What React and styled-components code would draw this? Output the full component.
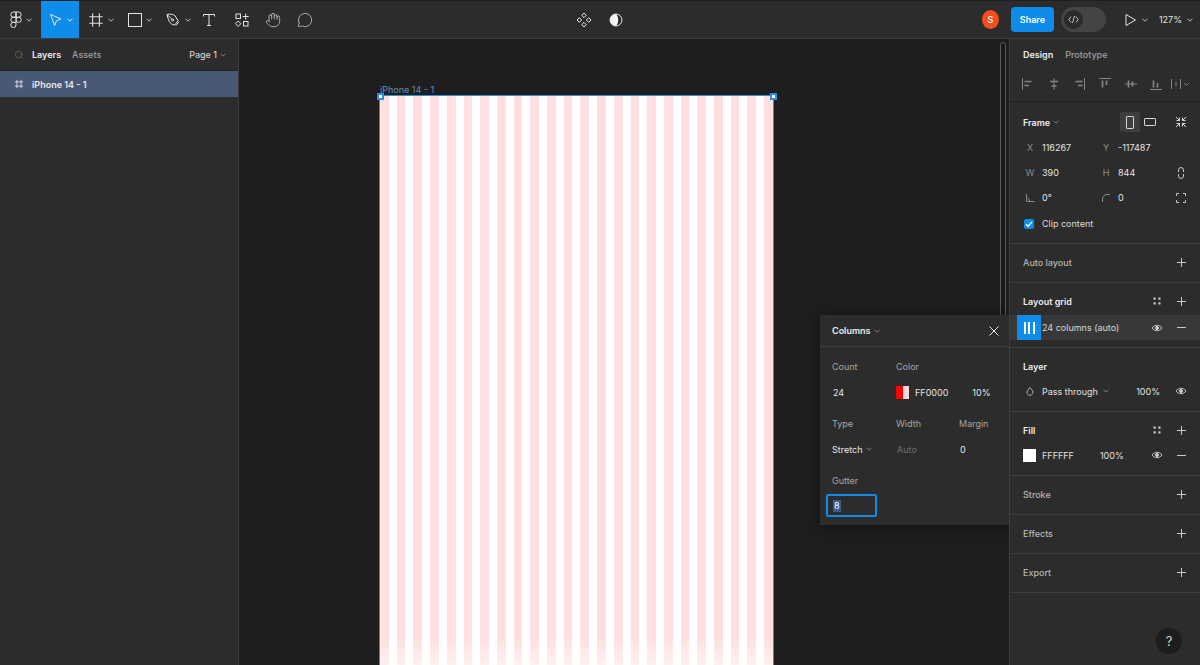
import React from "react";
import styled, { createGlobalStyle } from "styled-components";
import { Hand, MessageCircle, Search } from "lucide-react";

const Global = createGlobalStyle`
  html, body { margin: 0; padding: 0; height: 100%; background: #1e1e1e; overflow: hidden; }
  #root { height: 100%; }
  * { box-sizing: border-box; }
`;
const Page = styled.div`
  height: 665px; width: 1200px; display: flex; flex-direction: column; overflow: hidden;
  font-family: Inter, "Liberation Sans", sans-serif; font-size: 9px; color: #e6e6e6;
  -webkit-font-smoothing: antialiased;
`;
const Topbar = styled.header`
  height: 39px; flex: none; display: flex; align-items: stretch; background: #2c2c2c;
  border-top: 1px solid #1f1f1f; border-bottom: 1px solid #3d3d3d;
`;
const Tool = styled.div`
  width: ${p => p.$w}px; display: flex; align-items: center; justify-content: center; gap: 4px;
  color: #e4e4e4; background: ${p => (p.$active ? "#0d8ce9" : "transparent")};
`;
const CenterTools = styled.div`
  margin-left: 248px; display: flex; align-items: center; gap: 16px; width: 48px;
  & > svg { flex: none; }
`;
const RightTools = styled.div`
  margin-left: auto; display: flex; align-items: center;
`;
const Avatar = styled.div`
  width: 17px; height: 19px; border-radius: 50%; background: #f24e1e; color: #fff; font-size: 9px;
  font-weight: 500; display: flex; align-items: center; justify-content: center; margin-right: 12px;
`;
const ShareBtn = styled.div`
  width: 43px; height: 25px; border-radius: 4px; background: #0d8ce9; color: #fff; font-weight: 600;
  display: flex; align-items: center; justify-content: center; margin-right: 7px;
`;
const DevToggle = styled.div`
  width: 45px; height: 25px; border-radius: 13px; background: #444; padding: 3px; margin-right: 17px;
`;
const Knob = styled.div`
  width: 19px; height: 19px; border-radius: 50%; background: #2a2a2a; display: flex; align-items: center;
  justify-content: center;
`;
const Group = styled.div`
  display: flex; align-items: center; gap: ${p => p.$gap || 4}px; margin-right: ${p => p.$mr || 0}px; color: #e4e4e4;
`;
const Main = styled.main`
  flex: 1; min-height: 0; display: flex;
`;
const LeftPanel = styled.aside`
  width: 239px; flex: none; background: #2c2c2c; border-right: 1px solid #3d3d3d;
`;
const LeftTabs = styled.div`
  height: 32px; display: flex; align-items: center; padding: 0 10px 0 14px; color: #9a9a9a; border-bottom: 1px solid #232323;
`;
const LeftTab = styled.span`
  font-weight: ${p => (p.$on ? 600 : 500)}; color: ${p => (p.$on ? "#ececec" : "#a0a0a0")};
  margin-left: ${p => p.$ml}px;
`;
const PageSel = styled.div`
  margin-left: auto; display: flex; align-items: center; gap: 3px; color: #d0d0d0; font-weight: 500; margin-right: 2px;
`;
const LayerRow = styled.div`
  height: 26px; background: #4a5878; display: flex; align-items: center; gap: 8px; padding-left: 14px;
  font-weight: 600; color: #e8e8e8;
`;
const Canvas = styled.div`
  flex: 1; position: relative; overflow: hidden; background: #1e1e1e;
`;
const FrameLabel = styled.div`
  position: absolute; left: 141px; top: 45px; font-size: 9px; color: #5f93b8; line-height: 12px;
`;
const Frame = styled.div`
  position: absolute; left: 140px; top: 56px; width: 395px; height: 570px; background: #fff;
  border: 1px solid #2a8fe0; border-bottom: 0; display: flex; gap: 8px;
  &::after {
    content: ""; position: absolute; left: 0; right: 0; bottom: 0; height: 26px;
    background: linear-gradient(rgba(255,255,255,0), rgba(255,255,255,.55));
  }
`;
const Stripe = styled.div`
  flex: 1; background: #ffe0e0;
`;
const Handle = styled.div`
  position: absolute; width: 7px; height: 7px; background: #fff; border: 2px solid #2a8fe0;
  top: 54px; left: ${p => p.$x}px; z-index: 2;
`;
const Scrollbar = styled.div`
  position: absolute; left: 761px; top: 3px; width: 6px; height: 300px; border-radius: 3px;
  border: 1px solid #5a5a5a; background: #1a1a1a;
`;
const Popover = styled.div`
  position: absolute; left: 581px; top: 276px; width: 190px; height: 210px; background: #2c2c2c; z-index: 3;
  box-shadow: 0 2px 14px rgba(0,0,0,.45); color: #e6e6e6;
`;
const PopHead = styled.div`
  height: 32px; display: flex; align-items: center; padding: 0 10px 0 12px; border-bottom: 1px solid #3d3d3d;
  font-weight: 600; color: #ececec; gap: 3px; margin-bottom: 6px;
`;
const PopClose = styled.div`
  margin-left: auto; display: flex;
`;
const PopGrid = styled.div`
  display: grid; grid-template-columns: 64px 63px 1fr; grid-auto-rows: 26px; padding-left: 12px; align-items: center;
  margin-bottom: 5px;
`;
const PopLabel = styled.div`
  color: #a8a8a8; font-size: 9px;
`;
const PopVal = styled.div`
  color: ${p => (p.$muted ? "#6f6f6f" : "#e6e6e6")}; display: flex; align-items: center; gap: 3px; font-size: 9px;
  padding-left: ${p => p.$pl || 0}px;
`;
const ColorCell = styled.div`
  grid-column: 2 / 4; display: flex; align-items: center; gap: 6px;
`;
const ColorSwatch = styled.div`
  width: 13px; height: 13px; display: flex;
  & > i { flex: 1; background: #ff0000; }
  & > b { flex: 1; background: #ffd9d9; }
`;
const Pct = styled.span`
  margin-left: ${p => p.$ml}px;
`;
const GutterInput = styled.div`
  width: 51px; height: 23px; border: 2px solid #0d8ce9; border-radius: 2px; margin: -4px 0 0 6px;
  display: flex; align-items: center; padding-left: 5px;
`;
const Selected = styled.span`
  background: #3a5f8f; color: #fff; padding: 0 1px; line-height: 12px;
`;
const RightPanel = styled.aside`
  width: 191px; flex: none; background: #2c2c2c; border-left: 1px solid #3d3d3d; position: relative;
`;
const RightTabs = styled.div`
  height: 31px; display: flex; align-items: center; padding-left: 13px; gap: 12px;
`;
const AlignRow = styled.div`
  height: 33px; display: flex; align-items: center; padding: 0 0 4px 11px; border-bottom: 2px solid #262626; color: #858585;
  & > svg { margin-right: 11.7px; flex: none; }
  & > svg:last-child { margin-left: -4px; }
`;
const Section = styled.section`
  border-bottom: 1px solid #3d3d3d; height: ${p => p.$h}px;
`;
const Head = styled.div`
  height: 36px; display: flex; align-items: center; padding: 0 13px; font-weight: ${p => (p.$on ? 600 : 500)};
  color: ${p => (p.$on ? "#ececec" : "#b6b6b6")};
`;
const HeadIcons = styled.div`
  margin-left: auto; display: flex; align-items: center; gap: 15.5px; color: #c8c8c8;
`;
const FrameHead = styled.div`
  height: 38px; display: flex; align-items: center; padding-left: 13px; font-weight: 600; color: #ececec; gap: 3px; margin-bottom: -6px;
`;
const FrameIcons = styled.div`
  margin-left: auto; display: flex; align-items: center; color: #d8d8d8; padding-right: 13px;
`;
const IconBtn = styled.div`
  width: 20px; height: 20px; border-radius: 2px; background: ${p => (p.$on ? "#3e3e3e" : "transparent")};
  display: flex; align-items: center; justify-content: center; margin-right: ${p => p.$mr || 0}px;
`;
const PropGrid = styled.div`
  display: grid; grid-template-columns: 19px 57px 19px 52px 22px; grid-auto-rows: 25px; padding-left: 13px; align-items: center;
`;
const PropLabel = styled.div`
  color: #8a8a8a; text-align: center; padding-right: 5px; display: flex; justify-content: center;
`;
const PropVal = styled.div`
  color: #e4e4e4;
`;
const PropIcon = styled.div`
  color: #c4c4c4; display: flex; justify-content: center;
`;
const ClipRow = styled.div`
  display: flex; align-items: center; gap: 8px; padding: 1px 0 0 14px; height: 26px; color: #dcdcdc;
`;
const Check = styled.div`
  width: 10px; height: 10px; border-radius: 2px; background: #0d8ce9; display: flex; align-items: center; justify-content: center;
`;
const GridRow = styled.div`
  height: 25px; background: #383838; display: flex; align-items: center; padding-right: 13px; margin-top: -4px;
`;
const GridChip = styled.div`
  width: 24px; height: 25px; background: #0d8ce9; margin-left: 7px; display: flex; align-items: center; justify-content: center; gap: 2.5px;
  & > i { width: 2px; height: 12px; background: #fff; }
`;
const RowIcons = styled.div`
  margin-left: auto; display: flex; align-items: center; gap: ${p => p.$gap || 13.5}px; color: #c8c8c8;
`;
const RowText = styled.span`
  color: #e0e0e0;
`;
const GridText = styled.span`
  margin-left: 1px; color: #d8d8d8;
`;
const ValRow = styled.div`
  height: 24px; display: flex; align-items: center; padding: 0 13px; color: #e0e0e0; margin-top: -5px;
`;
const Swatch = styled.div`
  width: 13px; height: 13px; background: #fff; margin-right: 6px;
`;
const DropIconWrap = styled.div`
  width: 19px; display: flex; color: #b0b0b0; padding-left: 2px;
`;
const HelpBtn = styled.div`
  position: absolute; left: 146px; top: 589px; width: 26px; height: 26px; border-radius: 50%; background: #1d1d1d;
  color: #d0d0d0; font-size: 13px; display: flex; align-items: center; justify-content: center;
`;

const S = { fill: "none", stroke: "currentColor", strokeWidth: 1 };
const Ic = ({ s = 16, children, ...r }) => <svg width={s} height={s} viewBox={`0 0 ${s} ${s}`} {...S} {...r}>{children}</svg>;
const Caret = ({ c = "#d0d0d0" }) => <svg width="6" height="4" viewBox="0 0 6 4" fill="none" stroke={c} strokeWidth="0.9"><path d="M.5.7 3 3.2 5.5.7" /></svg>;
const Plus = () => <Ic s={11}><path d="M5.5 1v9M1 5.5h9" /></Ic>;
const Minus = () => <Ic s={11}><path d="M1 5.500h9" /></Ic>;
const Eye = () => <Ic s={12}><path d="M1 6c2.600-3.600 7.400-3.600 10 0-2.600 3.600-7.400 3.600-10 0Z" /><circle cx="6" cy="6" r="1.600" fill="currentColor" /></Ic>;
const Dots = () => <svg width="8" height="8" viewBox="0 0 8 8" fill="currentColor"><rect x="0.500" y="0.500" width="2.200" height="2.200" /><rect x="5.300" y="0.500" width="2.200" height="2.200" /><rect x="0.500" y="5.300" width="2.200" height="2.200" /><rect x="5.300" y="5.300" width="2.200" height="2.200" /></svg>;
const Hash = ({ s = 12, w = 1 }) => <svg width={s} height={s} viewBox="0 0 12 12" fill="none" stroke="currentColor" strokeWidth={w}><path d="M3.500 1v10M8.500 1v10M1 3.500h10M1 8.500h10" /></svg>;

const FigmaLogo = () => (
  <svg width="12" height="17" viewBox="0 0 12 17" {...S}>
    <path d="M6 1H3.400a2.600 2.600 0 0 0 0 5.200H6ZM6 1h2.600a2.600 2.600 0 0 1 0 5.200H6ZM6 6.200H3.400a2.600 2.600 0 0 0 0 5.200H6ZM6 11.400H3.400A2.600 2.600 0 1 0 6 14ZM6 8.800a2.600 2.600 0 1 0 5.200 0 2.600 2.600 0 1 0-5.200 0Z" />
  </svg>
);
const Cursor = () => <Ic><path d="M3.500 2.500 14 7l-4.500 1.700L7.700 13.500Z" /></Ic>;
const RectI = () => <Ic s={14}><rect x=".5" y=".5" width="13" height="13" /></Ic>;
const Pen = () => <Ic><path d="M2 2.500c3-.8 6-.3 8 1.200l3 5-3.200 4.300c-2.700-.4-4.400-1.600-5.500-3.600C3.200 7.500 2.500 5 2 2.500ZM2 2.500 7 7.300" /><circle cx="7.700" cy="8" r="1" /><path d="m11 13.500 3-3.800" /></Ic>;
const TypeI = () => <Ic><path d="M2.500 4.500V2.500h11v2M8 2.500v11M6 13.500h4" /></Ic>;
const Comps = () => <Ic><rect x="2" y="2" width="4.500" height="4.500" /><path d="M11.700 1.500v6M8.700 4.500h6" /><path d="m4.200 9 2.700 2.700-2.700 2.700-2.700-2.700Z" /><rect x="9.500" y="9.500" width="4.500" height="4.500" /></Ic>;
const Diamonds = () => <Ic><path d="m8 1 2.300 2.300L8 5.600 5.700 3.300ZM8 10.400l2.300 2.300L8 15l-2.300-2.300ZM3.300 5.700 5.600 8l-2.300 2.300L1 8ZM12.700 5.700 15 8l-2.300 2.300L10.400 8Z" /></Ic>;
const HalfCircle = () => <svg width="16" height="16" viewBox="0 0 16 16"><circle cx="8" cy="8" r="6" fill="none" stroke="#e6e6e6" /><path d="M8 2a6 6 0 0 0 0 12c1.600-1.500 2.200-3.700 2.200-6S9.600 3.500 8 2Z" fill="#f4f4f4" /></svg>;
const Play = () => <Ic s={14}><path d="M3 1.500 12.500 7 3 12.500Z" /></Ic>;
const Close = () => <Ic s={12}><path d="m1.500 1.500 9 9M10.500 1.500l-9 9" /></Ic>;
const CodeI = () => <svg width="11" height="9" viewBox="0 0 11 9" fill="none" stroke="#d0d0d0" strokeWidth=".9"><path d="M3 1.500.8 4.500 3 7.500M8 1.500l2.200 3-2.200 3M6.500 1 4.500 8" /></svg>;
const A1 = ({ line, bars }) => <svg width="14" height="14" viewBox="0 0 14 14" fill="none" stroke="currentColor"><path d={line} /><path d={bars} strokeWidth="1.700" /></svg>;
const aligns = [
  ["M1.500 1v12", "M3.500 4.500h7M3.500 8.500h4.500"],
  ["M7 1v12", "M3 4.500h8M4.500 9h5"],
  ["M12.500 1v12", "M3.500 4.500h7M6 8.500h4.500"],
  ["M1 1.500h12", "M4.500 3.500v7M8.500 3.500v4.500"],
  ["M1 7h12", "M4.500 3.500v7M8.500 4.500v5"],
  ["M1 12.500h12", "M4.500 3.500v7M8.500 6v4.500"],
];
const Portrait = () => <svg width="8" height="13" viewBox="0 0 8 13" fill="none" stroke="currentColor"><rect x=".5" y=".5" width="7" height="12" rx=".6" /></svg>;
const Landscape = () => <svg width="12" height="8" viewBox="0 0 12 8" fill="none" stroke="currentColor"><rect x=".5" y=".5" width="11" height="7" rx=".6" /></svg>;
const Shrink = () => <Ic s={12}><path d="m1 1 3.500 3.500M4.500 1.500v3H1.500M11 1 7.500 4.500M7.500 1.500v3h3M1 11l3.500-3.500M4.500 10.500v-3H1.500M11 11 7.500 7.500M7.500 10.500v-3h3" /></Ic>;
const LinkI = () => <Ic s={12}><path d="M3.500 5V3a2.500 2.500 0 0 1 5 0v2M3.500 7v2a2.500 2.500 0 0 0 5 0V7" /></Ic>;
const CornersI = () => <Ic s={12}><path d="M1.500 4V1.500H4M8 1.500h2.500V4M10.500 8v2.500H8M4 10.500H1.500V8" /></Ic>;
const AngleI = () => <Ic s={10}><path d="M1.500 1v7.500h8M1.500 4.500c1.800.3 3 1.800 3 4" /></Ic>;
const RadiusI = () => <Ic s={10}><path d="M1.500 9V6a4.500 4.500 0 0 1 4.500-4.500h3" /></Ic>;
const Drop = () => <Ic s={10}><path d="M5 1.500 7.700 5a3 3 0 1 1-5.400 0Z" /></Ic>;

export default function App() {
  return (
    <Page>
      <Global />
      <Topbar>
        <Tool $w={41}><FigmaLogo /><Caret /></Tool>
        <Tool $w={38} $active><Cursor /><Caret c="#fff" /></Tool>
        <Tool $w={43}><Hash s={16} w={.8} /><Caret /></Tool>
        <Tool $w={35}><RectI /><Caret /></Tool>
        <Tool $w={41}><Pen /><Caret /></Tool>
        <Tool $w={22}><TypeI /></Tool>
        <Tool $w={44}><Comps /></Tool>
        <Tool $w={18}><Hand size={16} strokeWidth={1} /></Tool>
        <Tool $w={46}><MessageCircle size={16} strokeWidth={1} /></Tool>
        <CenterTools><Diamonds /><HalfCircle /></CenterTools>
        <RightTools>
          <Avatar>S</Avatar>
          <ShareBtn>Share</ShareBtn>
          <DevToggle><Knob><CodeI /></Knob></DevToggle>
          <Group $gap={5} $mr={11}><Play /><Caret /></Group>
          <Group $gap={5} $mr={7}>127%<Caret /></Group>
        </RightTools>
      </Topbar>
      <Main>
        <LeftPanel>
          <LeftTabs>
            <Search size={10} strokeWidth={1} />
            <LeftTab $on $ml={8}>Layers</LeftTab>
            <LeftTab $ml={11}>Assets</LeftTab>
            <PageSel>Page 1 <Caret c="#888" /></PageSel>
          </LeftTabs>
          <LayerRow><Hash s={10} />iPhone 14 - 1</LayerRow>
        </LeftPanel>
        <Canvas>
          <FrameLabel>iPhone 14 - 1</FrameLabel>
          <Frame>{Array.from({ length: 24 }, (_, i) => <Stripe key={i} />)}</Frame>
          <Handle $x={138} />
          <Handle $x={531} />
          <Scrollbar />
          <Popover>
            <PopHead>Columns <Caret c="#888" /><PopClose><Close /></PopClose></PopHead>
            <PopGrid>
              <PopLabel>Count</PopLabel><PopLabel>Color</PopLabel><span />
              <PopVal $pl={1}>24</PopVal>
              <ColorCell>
                <ColorSwatch><i /><b /></ColorSwatch>FF0000<Pct $ml={18}>10%</Pct>
              </ColorCell>
            </PopGrid>
            <PopGrid>
              <PopLabel>Type</PopLabel><PopLabel>Width</PopLabel><PopLabel>Margin</PopLabel>
              <PopVal>Stretch <Caret c="#888" /></PopVal><PopVal $muted $pl={1}>Auto</PopVal><PopVal $pl={1}>0</PopVal>
            </PopGrid>
            <PopGrid>
              <PopLabel>Gutter</PopLabel>
            </PopGrid>
            <GutterInput><Selected>8</Selected></GutterInput>
          </Popover>
        </Canvas>
        <RightPanel>
          <RightTabs><LeftTab $on $ml={0}>Design</LeftTab><LeftTab $ml={0}>Prototype</LeftTab></RightTabs>
          <AlignRow>
            {aligns.map(([line, bars]) => <A1 key={line} line={line} bars={bars} />)}
            <svg width="20" height="14" viewBox="0 0 20 14" fill="none" stroke="currentColor"><path d="M.5 2v10M9.500 2v10M5 4.500v5" /><path d="m13 6 2.500 2.500L18 6" strokeWidth=".8" /></svg>
          </AlignRow>
          <Section $h={141}>
            <FrameHead>Frame <Caret c="#888" />
              <FrameIcons>
                <IconBtn $on><Portrait /></IconBtn>
                <IconBtn $mr={15}><Landscape /></IconBtn>
                <Shrink />
              </FrameIcons>
            </FrameHead>
            <PropGrid>
              <PropLabel>X</PropLabel><PropVal>116267</PropVal><PropLabel>Y</PropLabel><PropVal>-117487</PropVal><span />
              <PropLabel>W</PropLabel><PropVal>390</PropVal><PropLabel>H</PropLabel><PropVal>844</PropVal><PropIcon><LinkI /></PropIcon>
              <PropLabel><AngleI /></PropLabel><PropVal>0°</PropVal><PropLabel><RadiusI /></PropLabel><PropVal>0</PropVal><PropIcon><CornersI /></PropIcon>
            </PropGrid>
            <ClipRow>
              <Check><svg width="8" height="8" viewBox="0 0 8 8" fill="none" stroke="#fff" strokeWidth="1.300"><path d="M1 4.200 3.200 6.200 7 1.800" /></svg></Check>
              Clip content
            </ClipRow>
          </Section>
          <Section $h={39}>
            <Head>Auto layout<HeadIcons><Plus /></HeadIcons></Head>
          </Section>
          <Section $h={65}>
            <Head $on>Layout grid<HeadIcons><Dots /><Plus /></HeadIcons></Head>
            <GridRow>
              <GridChip><i /><i /><i /></GridChip>
              <GridText>24 columns (auto)</GridText>
              <RowIcons><Eye /><Minus /></RowIcons>
            </GridRow>
          </Section>
          <Section $h={64}>
            <Head $on>Layer</Head>
            <ValRow>
              <DropIconWrap><Drop /></DropIconWrap>Pass through&nbsp;&nbsp;<Caret c="#888" />
              <RowIcons $gap={15}><RowText>100%</RowText><Eye /></RowIcons>
            </ValRow>
          </Section>
          <Section $h={64}>
            <Head $on>Fill<HeadIcons><Dots /><Plus /></HeadIcons></Head>
            <ValRow>
              <Swatch />FFFFFF<Pct $ml={26}>100%</Pct>
              <RowIcons><Eye /><Minus /></RowIcons>
            </ValRow>
          </Section>
          <Section $h={39}><Head>Stroke<HeadIcons><Plus /></HeadIcons></Head></Section>
          <Section $h={39}><Head>Effects<HeadIcons><Plus /></HeadIcons></Head></Section>
          <Section $h={39}><Head>Export<HeadIcons><Plus /></HeadIcons></Head></Section>
          <HelpBtn>?</HelpBtn>
        </RightPanel>
      </Main>
    </Page>
  );
}
